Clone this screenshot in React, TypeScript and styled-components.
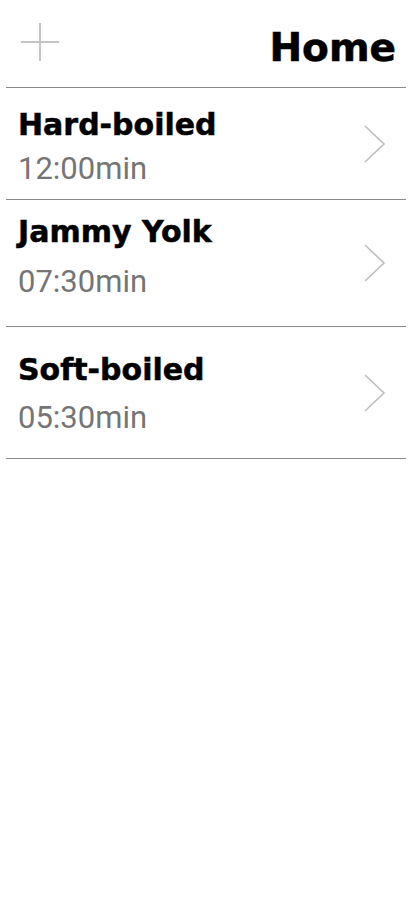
import React from "react";
import styled, { createGlobalStyle } from "styled-components";

const GlobalStyle = createGlobalStyle`
  html, body {
    margin: 0;
    padding: 0;
    background: #ffffff;
  }
  * {
    box-sizing: border-box;
  }
`;

type Recipe = {
  name: string;
  time: string;
  height: number;
  top: number;
  gap: number;
};

const recipes: Recipe[] = [
  { name: "Hard-boiled", time: "12:00min", height: 112, top: 22, gap: 13 },
  { name: "Jammy Yolk", time: "07:30min", height: 127, top: 17, gap: 19 },
  { name: "Soft-boiled", time: "05:30min", height: 132, top: 28, gap: 17 }
];

export default function App() {
  return (
    <>
      <GlobalStyle />
      <Screen>
        <Header>
          <AddButton aria-label="Add">
            <svg width="38" height="38" viewBox="0 0 38 38">
              <line x1="19" y1="0" x2="19" y2="38" stroke="#c4c4c4" strokeWidth="2" />
              <line x1="0" y1="19" x2="38" y2="19" stroke="#c4c4c4" strokeWidth="2" />
            </svg>
          </AddButton>
          <Title>Home</Title>
        </Header>
        <List>
          {recipes.map(r => (
            <Row key={r.name} $height={r.height}>
              <RowText $top={r.top}>
                <RowName>{r.name}</RowName>
                <RowTime $gap={r.gap}>{r.time}</RowTime>
              </RowText>
              <Chevron width="22" height="38" viewBox="0 0 22 38">
                <polyline
                  points="1,1 20,19 1,37"
                  fill="none"
                  stroke="#bdbdbd"
                  strokeWidth="1.6"
                />
              </Chevron>
            </Row>
          ))}
        </List>
      </Screen>
    </>
  );
}

const Screen = styled.div`
  width: 412px;
  min-height: 917px;
  background: #ffffff;
`;

const Header = styled.header`
  height: 88px;
  margin: 0 6px;
  padding: 23px 10px 0 15px;
  display: flex;
  flex-direction: row;
  align-items: flex-start;
  justify-content: space-between;
  border-bottom: 1px solid #8a8a8a;
`;

const AddButton = styled.div`
  width: 38px;
  height: 38px;
  display: flex;
`;

const Title = styled.h1`
  margin: 5px 0 0 0;
  font-family: "DejaVu Sans", sans-serif;
  font-weight: 700;
  font-size: 39px;
  line-height: 39px;
  color: #000000;
  -webkit-text-stroke: 0.6px #000000;
`;

const List = styled.div`
  margin: 0 6px;
  display: flex;
  flex-direction: column;
`;

const Row = styled.div<{ $height: number }>`
  height: ${p => p.$height}px;
  padding: 0 20px 0 12px;
  display: flex;
  flex-direction: row;
  align-items: center;
  justify-content: space-between;
  border-bottom: 1px solid #8a8a8a;
`;

const RowText = styled.div<{ $top: number }>`
  align-self: flex-start;
  padding-top: ${p => p.$top}px;
  display: flex;
  flex-direction: column;
`;

const RowName = styled.div`
  font-family: "DejaVu Sans", sans-serif;
  font-weight: 700;
  font-size: 30px;
  line-height: 30px;
  color: #000000;
  -webkit-text-stroke: 0.5px #000000;
`;

const RowTime = styled.div<{ $gap: number }>`
  margin-top: ${p => p.$gap}px;
  font-family: Roboto, sans-serif;
  font-size: 31px;
  line-height: 31px;
  color: #757575;
`;

const Chevron = styled.svg`
  flex-shrink: 0;
`;
